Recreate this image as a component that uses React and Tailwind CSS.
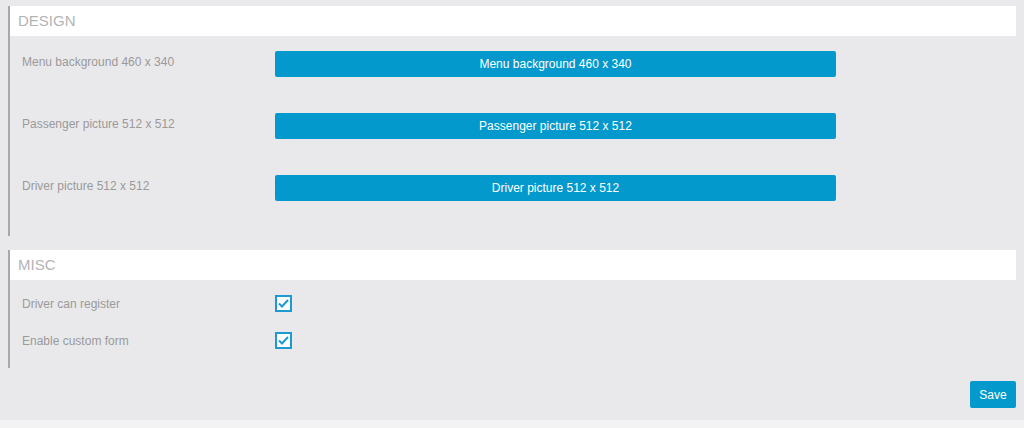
const designRows = [
    "Menu background 460 x 340",
    "Passenger picture 512 x 512",
    "Driver picture 512 x 512"
];

const miscRows = ["Driver can register", "Enable custom form"];

function Checkbox() {
    return (
        <span className="flex justify-center items-center w-[17px] h-[17px] border-2 border-[#1b9ad4] bg-white">
            <svg width="11" height="9" viewBox="0 0 11 9" fill="none">
                <path d="M1 4.5 L4 7.5 L10 1" stroke="#1b9ad4" strokeWidth="2" />
            </svg>
        </span>
    );
};

function SectionHeader({ title }) {
    return (
        <div className="flex items-center h-[30px] bg-white pl-[8px] text-[15px] text-[#b4b4b4] uppercase">
            {title}
        </div>
    );
};

export default function App() {
    return (
        <div className="w-[1024px] h-[428px] flex flex-col font-['Liberation_Sans',Arial,sans-serif] bg-[#e9e9eb]">
            <div className="flex flex-col h-[420px] pt-[6px] pl-[8px] pr-[8px]">
                <section className="border-l-2 border-[#a8a8a8]">
                    <SectionHeader title="Design" />
                    <div className="flex flex-col h-[200px] pt-[15px] pl-[12px] gap-[37px]">
                        {designRows.map(label => (
                            <div key={label} className="flex items-center h-[25px]">
                                <p className="w-[253px] text-[12px] text-[#9a9a9a] -mt-[4px]">{label}</p>
                                <button className="w-[561px] h-[26px] rounded-[2px] bg-[#0399cc] text-white text-[12px]">
                                    {label}
                                </button>
                            </div>
                        ))}
                    </div>
                </section>
                <section className="mt-[14px] border-l-2 border-[#a8a8a8]">
                    <SectionHeader title="Misc" />
                    <div className="flex flex-col h-[88px] pt-[15px] pl-[12px] gap-[20px]">
                        {miscRows.map(label => (
                            <div key={label} className="flex items-center h-[17px]">
                                <p className="w-[253px] text-[12px] text-[#9a9a9a]">{label}</p>
                                <Checkbox />
                            </div>
                        ))}
                    </div>
                </section>
                <div className="flex justify-end mt-[13px]">
                    <button className="w-[46px] h-[27px] rounded-[2px] bg-[#0399cc] text-white text-[12px]">Save</button>
                </div>
            </div>
            <div className="h-[8px] bg-[#f3f3f4]"></div>
        </div>
    );
};
